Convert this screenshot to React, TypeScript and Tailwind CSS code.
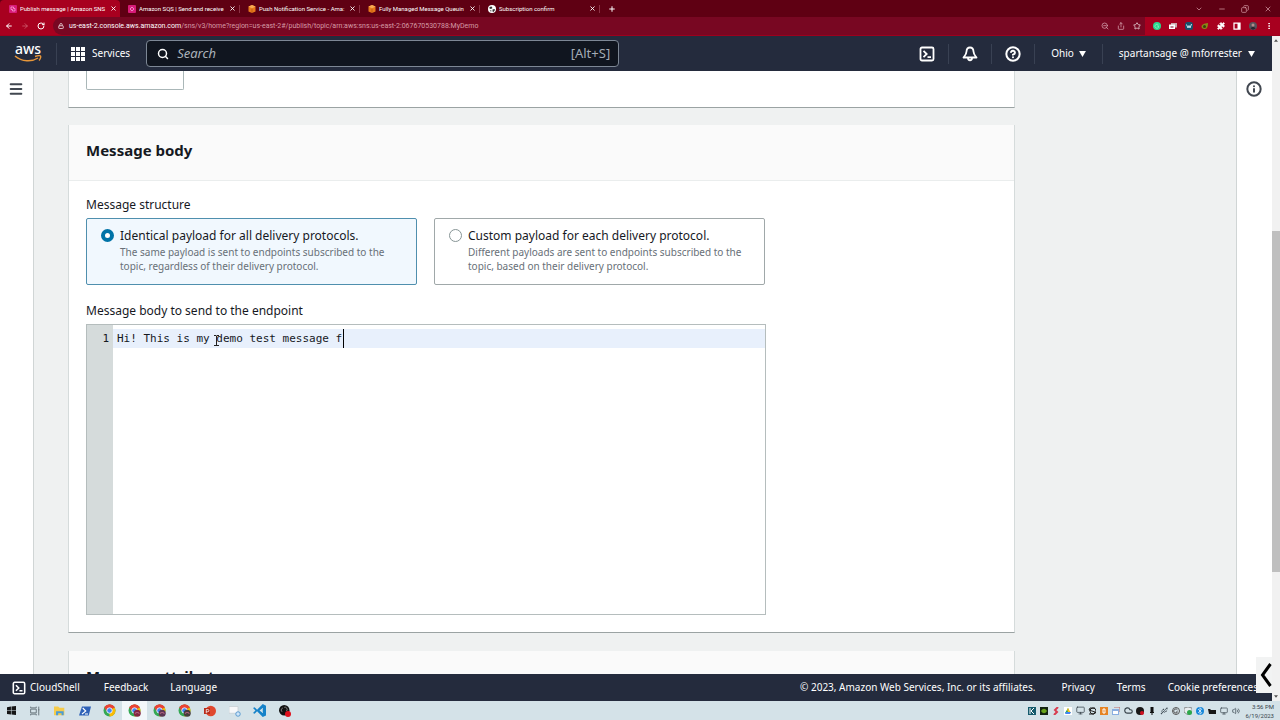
import React from "react";
import {
    ArrowLeft,
    ArrowRight,
    Bluetooth,
    ChevronDown,
    CircleHelp,
    Cloud,
    Copy,
    Info,
    Lock,
    Menu,
    Minus,
    Monitor,
    MoreVertical,
    Plus,
    Puzzle,
    RotateCw,
    Search,
    Share,
    Star,
    Usb,
    Volume2,
    X,
    ZoomOut,
} from "lucide-react";

const TABS = [
    { title: "Publish message | Amazon SNS", icon: "sns", active: true },
    { title: "Amazon SQS | Send and receive", icon: "sqs", active: false },
    { title: "Push Notification Service - Ama:", icon: "cube", active: false },
    { title: "Fully Managed Message Queuin", icon: "cube", active: false },
    { title: "Subscription confirm", icon: "globe", active: false },
];

const TabIcon: React.FC<{ name: string }> = ({ name }) => {
    if (name === "globe") {
        return (
            <svg viewBox="0 0 16 16" className="size-2 shrink-0">
                <circle cx="8" cy="8" r="8" fill="#fff" />
                <path d="M3 4l4-1 2 3-3 2-3-1zM9 9l4-1 1 2-3 4-2-1zM4 10l3 1-1 3z" fill="#333" />
            </svg>
        );
    }
    if (name === "cube") {
        return (
            <svg viewBox="0 0 16 16" className="size-2 shrink-0">
                <path d="M8 0l7 3v10l-7 3-7-3V3z" fill="#e8791c" />
                <path d="M8 0l7 3-7 4-7-4z" fill="#f8ac55" />
                <path d="M8 7v9" stroke="#9a4508" />
            </svg>
        );
    }
    return (
        <svg viewBox="0 0 16 16" className="size-2 shrink-0">
            <rect width="16" height="16" rx="2" fill="#d81b78" />
            <path
                d={name === "sns" ? "M4 4h5v3h3v5H7V9H4z" : "M4 8l4-4 4 4-4 4z"}
                fill="none"
                stroke="#f6a9d8"
                strokeWidth="1.5"
            />
        </svg>
    );
};

const TabStrip: React.FC = () => (
    <div className="flex h-[17px] items-center bg-[#5f0013] font-[Roboto,sans-serif] text-white">
        {TABS.map((tab) => (
            <div
                key={tab.title}
                className={
                    tab.active
                        ? "flex h-full w-[120px] items-center gap-[3px] rounded-t-sm bg-[#a8001f] pr-[3px] pl-[9px]"
                        : "flex h-2 w-[120px] items-center gap-[3px] border-r border-[#8c3044] pr-[3px] pl-[8px]"
                }
            >
                <TabIcon name={tab.icon} />
                <span className="min-w-0 flex-1 overflow-hidden text-[6px] leading-[10px] whitespace-nowrap">
                    {tab.title}
                </span>
                <button aria-label="Close tab">
                    <X size={7} strokeWidth={3} />
                </button>
            </div>
        ))}
        <button aria-label="New tab" className="pl-2">
            <Plus size={8} strokeWidth={3} />
        </button>
        <div className="ml-auto flex items-center gap-[15px] pr-2 text-[#e3a9b3]">
            <button aria-label="Tab list"><ChevronDown size={8} /></button>
            <button aria-label="Minimize"><Minus size={8} /></button>
            <button aria-label="Restore"><Copy size={8} className="scale-x-[-1]" /></button>
            <button aria-label="Close window"><X size={8} /></button>
        </div>
    </div>
);

const AddressBar: React.FC = () => (
    <div className="flex h-[19px] items-center border-b border-[#9d001d] bg-[#a8001f] pl-[5px] font-[Roboto,sans-serif] text-white">
        <div className="flex w-12 items-center gap-2">
            <button aria-label="Back"><ArrowLeft size={8} strokeWidth={3} /></button>
            <button aria-label="Forward" className="text-[#d8707f]"><ArrowRight size={8} /></button>
            <button aria-label="Reload"><RotateCw size={8} strokeWidth={3} /></button>
        </div>
        <div className="flex h-full flex-1 items-center rounded-l-full bg-[#780722] pl-1">
            <Lock size={6} strokeWidth={4} className="ml-px text-[#d9b4bc]" />
            <span className="ml-[5px] text-[7px] whitespace-nowrap text-[#d59aa5]">
                <span className="text-white">us-east-2.console.aws.amazon.com</span>
                /sns/v3/home?region=us-east-2#/publish/topic/arn:aws:sns:us-east-2:067670530788:MyDemo
            </span>
            <div className="ml-auto flex items-center gap-2 pr-1 text-[#e3b5bf]">
                <ZoomOut size={8} />
                <Share size={8} />
                <Star size={8} className="text-white" />
            </div>
        </div>
        <div className="flex items-center gap-2 pr-[7px] pl-2">
            <svg viewBox="0 0 16 16" className="size-2">
                <circle cx="8" cy="8" r="8" fill="#28d88d" />
                <path d="M11 6a4 4 0 1 0 0 5V8H8" fill="none" stroke="#8df0c4" strokeWidth="1.5" />
            </svg>
            <svg viewBox="0 0 16 16" className="size-2">
                <path d="M4 2h12v9H4z" fill="#c9a9ae" />
                <path d="M0 5h12v9H0z" fill="#fff" />
                <path d="M3 9h6v2H3z" fill="#780722" />
            </svg>
            <svg viewBox="0 0 16 16" className="size-2">
                <rect width="16" height="16" rx="5" fill="#17506b" />
                <path d="M3 5l3 7 2-5 2 5 3-8" fill="none" stroke="#cfe6f0" strokeWidth="2" />
            </svg>
            <svg viewBox="0 0 16 16" className="size-2">
                <path d="M1 9c0-4 5-6 13-7 0 8-2 12-7 12-4 0-6-2-6-5z" fill="#8a8a16" />
                <circle cx="7" cy="9" r="3" fill="#3a3d10" />
            </svg>
            <Puzzle size={8} fill="#fff" className="text-white" />
            <svg viewBox="0 0 16 16" className="size-2">
                <path d="M2 2h12v12H2z" fill="none" stroke="#fff" strokeWidth="2.5" />
                <path d="M9 2h5v12H9z" fill="#fff" />
            </svg>
            <svg viewBox="0 0 16 16" className="size-2">
                <circle cx="8" cy="8" r="8" fill="#56535c" />
                <circle cx="8" cy="6" r="3" fill="#b58a8a" />
                <path d="M3 13c1-4 9-4 10 0-3 3-7 3-10 0z" fill="#282530" />
            </svg>
            <MoreVertical size={8} strokeWidth={3} className="text-white" />
        </div>
    </div>
);

const AwsLogo: React.FC = () => (
    <span className="flex w-7 flex-col items-center">
        <span className="h-[11px] text-[14px] leading-[10px] font-medium">aws</span>
        <svg viewBox="0 0 28 8" className="h-2 w-7 text-[#e8973a]">
            <path d="M1 1c7 6 17 6 23 2" fill="none" stroke="currentColor" strokeWidth="1.5" />
            <path d="M21 1.5c3-1 5-1 5.5-.5s0 3-1.500 4.500" fill="none" stroke="currentColor" strokeWidth="1.4" />
        </svg>
    </span>
);

const ShellIcon: React.FC<{ className: string }> = ({ className }) => (
    <svg viewBox="0 0 16 16" className={className} fill="none" stroke="currentColor" strokeWidth="1.8">
        <rect x="1.5" y="1.5" width="13" height="13" rx="1.500" />
        <path d="M4.500 4.800L7.700 8l-3.200 3.200M8.500 11.200h3.500" />
    </svg>
);

const Caret: React.FC = () => (
    <svg viewBox="0 0 8 7" className="h-[6px] w-[7px]">
        <path d="M0 0h8L4 7z" fill="currentColor" />
    </svg>
);

const AwsHeader: React.FC = () => (
    <header className="flex h-[35px] shrink-0 items-center bg-[#242b3d] text-[10px] text-white">
        <a href="#home" aria-label="AWS home" className="pl-[14px]">
            <AwsLogo />
        </a>
        <span className="ml-[14px] h-[22px] w-px bg-[#394153]" />
        <button className="ml-[14px] flex items-center gap-[7px]">
            <svg viewBox="0 0 14 14" className="size-[14px]" fill="currentColor">
                <path d="M0 0h4v4H0zM5 0h4v4H5zM10 0h4v4h-4zM0 5h4v4H0zM5 5h4v4H5zM10 5h4v4h-4zM0 10h4v4H0zM5 10h4v4H5zM10 10h4v4h-4z" />
            </svg>
            Services
        </button>
        <label className="ml-4 flex h-[27px] w-[473px] items-center rounded-sm border border-[#7d8795] bg-[#10151f] pr-2 pl-[10px]">
            <Search size={12} strokeWidth={3} />
            <input
                type="text"
                aria-label="Search"
                placeholder="Search"
                className="ml-2 min-w-0 flex-1 bg-transparent text-[13px] outline-none placeholder:text-[#aab2bb] placeholder:italic"
            />
            <span className="text-[13px] text-[#a3abb5]">[Alt+S]</span>
        </label>
        <div className="ml-auto flex items-center">
            <button aria-label="CloudShell"><ShellIcon className="size-4" /></button>
            <span className="mx-[13px] h-[20px] w-px bg-[#394153]" />
            <button aria-label="Notifications">
                <svg viewBox="0 0 16 16" className="size-4" fill="none" stroke="currentColor" strokeWidth="1.8" strokeLinejoin="round">
                    <path d="M8 1.500c-2.500 0-3.400 1.800-3.500 4C4.300 8.500 3 9.500 1.500 11.500h13C13 9.500 11.700 8.500 11.500 5.500c-.1-2.200-1-4-3.500-4zM6 12c0 3 4 3 4 0" />
                </svg>
            </button>
            <span className="mx-[13px] h-[20px] w-px bg-[#394153]" />
            <button aria-label="Help"><CircleHelp size={16} strokeWidth={3} /></button>
            <span className="ml-[13px] h-[20px] w-px bg-[#394153]" />
            <button className="ml-4 flex items-center gap-[5px]">
                Ohio <Caret />
            </button>
            <span className="ml-4 h-[20px] w-px bg-[#394153]" />
            <button className="mr-[17px] ml-4 flex items-center gap-[6px]">
                spartansage @ mforrester <Caret />
            </button>
        </div>
    </header>
);

type PanelProps = { title: string; children?: React.ReactNode };

const Panel: React.FC<PanelProps> = ({ title, children }) => (
    <section className="mb-[18px] border-x border-b border-[#d5dbdb] border-b-[#9ba3a3] bg-white">
        <h2 className="border-b border-[#eaeded] bg-[#fafafa] px-[17px] pt-[14px] pb-[19px] text-[15px] leading-[22px] font-bold">
            {title}
        </h2>
        {children}
    </section>
);

type TileProps = {
    title: string;
    description: string;
    checked: boolean;
    onSelect: () => void;
};

const Tile: React.FC<TileProps> = ({ title, description, checked, onSelect }) => (
    <label
        className={
            checked
                ? "flex flex-1 gap-[6px] rounded-[2px] border border-[#4f8fae] bg-[#f1f8fe] px-[14px] pt-[9px] pb-[11px]"
                : "flex flex-1 gap-[6px] rounded-[2px] border border-[#a0a8a9] bg-white px-[14px] pt-[9px] pb-[11px]"
        }
    >
        <input
            type="radio"
            name="structure"
            checked={checked}
            onChange={onSelect}
            className="mt-[1px] size-[13px] shrink-0 appearance-none rounded-full border border-[#879596] bg-white checked:border-4 checked:border-[#0073a7]"
        />
        <span>
            <span className="block text-[12px] leading-4 whitespace-nowrap">{title}</span>
            <span className="mt-px block text-[10px] leading-[14px] text-[#687078]">
                {description}
            </span>
        </span>
    </label>
);

const MessageBody: React.FC = () => {
    const [structure, setStructure] = React.useState("identical");
    return (
        <div className="px-[17px] pt-4 pb-[17px]">
            <fieldset>
                <legend className="text-[12px] leading-4">Message structure</legend>
                <div className="mt-[5px] flex w-[679px] gap-[17px]">
                    <Tile
                        title="Identical payload for all delivery protocols."
                        description="The same payload is sent to endpoints subscribed to the topic, regardless of their delivery protocol."
                        checked={structure === "identical"}
                        onSelect={() => setStructure("identical")}
                    />
                    <Tile
                        title="Custom payload for each delivery protocol."
                        description="Different payloads are sent to endpoints subscribed to the topic, based on their delivery protocol."
                        checked={structure === "custom"}
                        onSelect={() => setStructure("custom")}
                    />
                </div>
            </fieldset>
            <label htmlFor="body" className="mt-[18px] block text-[12px] leading-4">
                Message body to send to the endpoint
            </label>
            <div className="relative mt-[5px] flex h-[291px] w-[680px] border border-[#b5bdbd] font-['DejaVu_Sans_Mono','Liberation_Mono',monospace] text-[11px] leading-[19px]">
                <div className="w-[26px] bg-[#d5dbdb] pt-1 pr-1 text-right">1</div>
                <textarea
                    id="body"
                    spellCheck={false}
                    defaultValue="Hi! This is my demo test message f"
                    className="flex-1 resize-none bg-[linear-gradient(#e8f0fc,#e8f0fc)] bg-[length:100%_19px] bg-[position:0_4px] bg-no-repeat pt-1 pl-1 outline-none"
                />
                <span className="absolute top-1 left-[256px] h-[19px] w-px bg-black" />
                <svg viewBox="0 0 5 11" className="absolute top-[10px] left-[127px] h-[11px] w-[5px]" fill="none" stroke="#222">
                    <path d="M0 .5h2l.5.5.5-.5h2M2.500 1v9M0 10.500h5" />
                </svg>
            </div>
        </div>
    );
};

const AwsFooter: React.FC = () => (
    <footer className="relative flex h-[27px] shrink-0 items-center bg-[#242b3d] pr-[14px] pl-3 text-[10px] whitespace-nowrap text-white">
        <button className="flex items-center gap-1">
            <ShellIcon className="size-[14px]" /> CloudShell
        </button>
        <a href="#feedback" className="ml-6">Feedback</a>
        <button className="ml-[22px]">Language</button>
        <div className="ml-auto flex gap-[22px]">
            <span className="mr-1">© 2023, Amazon Web Services, Inc. or its affiliates.</span>
            <a href="#privacy">Privacy</a>
            <a href="#terms">Terms</a>
            <a href="#cookies">Cookie preferences</a>
        </div>
        <button
            aria-label="Expand"
            className="absolute right-0 bottom-2 flex h-9 w-4 items-center justify-end bg-[#f2f3f3] text-black"
        >
            <svg viewBox="0 0 11 24" className="h-6 w-3" fill="none" stroke="currentColor" strokeWidth="3">
                <path d="M10 1L2 12l8 11" />
            </svg>
        </button>
    </footer>
);

const PageScrollbar: React.FC = () => (
    <div className="flex w-2 shrink-0 flex-col items-center bg-[#f1f1f1] text-[#505050]">
        <svg viewBox="0 0 6 4" className="mt-[3px] h-[3px] w-1">
            <path d="M0 4l3-4 3 4z" fill="currentColor" />
        </svg>
        <div className="mt-[189px] h-[341px] w-full bg-[#bfbfbf]" />
        <svg viewBox="0 0 6 4" className="mt-auto mb-[3px] h-[3px] w-1">
            <path d="M0 0l3 4 3-4z" fill="currentColor" />
        </svg>
    </div>
);

const Chrome: React.FC<{ badge?: string }> = ({ badge }) => (
    <svg viewBox="0 0 24 24" className="size-[13px]">
        <circle cx="12" cy="12" r="11" fill="#34a853" />
        <path d="M12 12L2.500 6.500A11 11 0 0 1 21.500 6.500z" fill="#ea4335" />
        <path d="M12 12l9.500-5.500A11 11 0 0 1 12 23z" fill="#fbbc05" />
        <path d="M8 7h13.700A11 11 0 0 0 2.500 6.500L7 14z" fill="#ea4335" />
        <circle cx="12" cy="12" r="5" fill="#4285f4" stroke="#fff" strokeWidth="1.5" />
        {badge && <circle cx="17" cy="17" r="6.5" fill={badge} />}
        {badge && <path d="M13 18c2-3 6-3 8 0" stroke="#b06080" strokeWidth="2" fill="none" />}
    </svg>
);

const PINNED = [
    <svg viewBox="0 0 16 16" className="size-[9px]" fill="#151515">
        <path d="M0 2l7-1v6.500H0zM8 1l8-1v7.500H8zM0 8.500h7V15l-7-1zM8 8.500h8V16l-8-1z" />
    </svg>,
    <svg viewBox="0 0 16 16" className="size-[10px]" fill="none" stroke="#65727a" strokeWidth="1.5">
        <path d="M1 1v2h9V1M1 5h9v6H1zM1 15v-2h9v2M14 1v14M13 6h2" />
    </svg>,
    <svg viewBox="0 0 16 16" className="size-[11px]">
        <path d="M0 2h6l2 2h7v11H0z" fill="#f5cb4a" />
        <path d="M3 9h11v6h-3v-3H6v3H3z" fill="#4b9cd8" />
    </svg>,
    <svg viewBox="0 0 16 16" className="size-3">
        <path d="M4 2h12l-3 12H0z" fill="#2f62b8" />
        <path d="M5 4l4 4-5 4M8 12h4" fill="none" stroke="#fff" strokeWidth="1.5" />
    </svg>,
    <Chrome />,
    <Chrome badge="#842640" />,
    <Chrome badge="#5b3550" />,
    <Chrome badge="#463f3c" />,
    <svg viewBox="0 0 16 16" className="size-3">
        <circle cx="9" cy="8" r="7" fill="#e0482e" />
        <path d="M0 4h8v8H0z" fill="#b82d1b" />
        <path d="M3 11V6h2a1 1 0 0 1 0 3H3" fill="none" stroke="#fff" />
    </svg>,
    <svg viewBox="0 0 16 16" className="size-3">
        <path d="M0 2h12v9H0z" fill="#f7f8fa" stroke="#c6cdd3" />
        <circle cx="12" cy="12" r="3" fill="#cfe5f8" stroke="#3b87c8" />
    </svg>,
    <svg viewBox="0 0 16 16" className="size-[13px]">
        <path d="M12 0l4 2v12l-4 2-7-7-3 3-2-1 3-3-3-3 2-1 3 3zM12 5L8 8l4 3z" fill="#1582c9" fillRule="evenodd" />
    </svg>,
    <svg viewBox="0 0 16 16" className="size-3">
        <circle cx="7" cy="7" r="7" fill="#111" />
        <path d="M7 3a3 3 0 0 1 3 5M4 9a3 3 0 0 1 1-5" stroke="#aaa" fill="none" />
        <circle cx="12" cy="12" r="4" fill="#e0101c" />
    </svg>,
];

const TRAY = [
    <svg viewBox="0 0 8 8" className="size-2">
        <path d="M0 0h8v8H0z" fill="#155a6c" />
        <path d="M2 1v6M6 1L3 4l3 3" stroke="#fff" fill="none" />
    </svg>,
    <svg viewBox="0 0 8 8" className="size-2">
        <path d="M0 0h8v8H0z" fill="#132312" />
        <path d="M1 4c2-3 4-3 6 0-2 3-4 3-6 0z" fill="#6aa51c" />
    </svg>,
    <svg viewBox="0 0 8 8" className="size-2">
        <path d="M6 0L3 3l2 2-3 3" stroke="#d83c50" strokeWidth="2" fill="none" />
    </svg>,
    <svg viewBox="0 0 8 8" className="size-2">
        <path d="M0 0h8v8H0z" fill="#fff" />
        <path d="M4 1L1 6h2l2-3z" fill="#1ea362" />
        <path d="M4 1l3 5H5L3 3z" fill="#f9bd17" />
        <path d="M1 7l1-2h5L6 7z" fill="#4285f4" />
    </svg>,
    <Monitor size={9} />,
    <svg viewBox="0 0 8 8" className="size-2" fill="none" stroke="#222">
        <path d="M7 1H2L1 3l6 2-1 2H1" />
        <circle cx="5" cy="4" r="3" />
    </svg>,
    <svg viewBox="0 0 8 8" className="size-2">
        <path d="M0 0h8v8H0z" fill="#e58324" />
        <path d="M3 2h2v4H3z" fill="none" stroke="#fff" />
    </svg>,
    <svg viewBox="0 0 8 8" className="size-2">
        <path d="M0 2h7v6H0z" fill="#8aaee0" />
        <path d="M2 0h6v5" stroke="#bd6a68" fill="none" />
        <path d="M1 4h5v3H1z" fill="#fff" />
    </svg>,
    <Cloud size={9} strokeWidth={3} />,
    <svg viewBox="0 0 8 8" className="size-2">
        <circle cx="4" cy="4" r="4" fill="#181818" />
        <circle cx="6" cy="6" r="2" fill="#d01020" />
    </svg>,
    <svg viewBox="0 0 8 8" className="size-2">
        <path d="M2.500 0h3v5h-3zM2 5h4v1H4.500v2h-1V6H2z" fill="#111" />
    </svg>,
    <Usb size={8} />,
    <svg viewBox="0 0 8 8" className="size-2" fill="none" stroke="#555">
        <circle cx="4" cy="4" r="3.5" />
        <path d="M5.500 3a2 2 0 1 0 0 2H4" />
    </svg>,
    <svg viewBox="0 0 8 8" className="size-2">
        <path d="M0 1l4-1 4 1v4L4 8 0 5z" fill="#e9edf0" stroke="#555" strokeWidth=".6" />
        <circle cx="5.5" cy="5.5" r="2.5" fill="#2ca84a" />
    </svg>,
    <span className="rounded-full bg-[#1687d9] text-white"><Bluetooth size={8} /></span>,
    <svg viewBox="0 0 8 8" className="size-2">
        <path d="M0 2h2l1 1h5v4H1z" fill="#171717" />
    </svg>,
    <Monitor size={8} />,
    <Volume2 size={8} />,
];

const Taskbar: React.FC = () => (
    <div className="flex h-[19px] shrink-0 items-center bg-[#d4e2e8] text-[#37434b]">
        <div className="flex h-full">
            {PINNED.map((icon, i) => (
                <button
                    key={i}
                    aria-label="Open app"
                    className={
                        i === 5
                            ? "flex w-[25px] items-center justify-center bg-[#f2f7fa]"
                            : "flex w-[25px] items-center justify-center first:w-[22px]"
                    }
                >
                    {icon}
                </button>
            ))}
        </div>
        <div className="ml-auto flex">
            {TRAY.map((icon, i) => (
                <span key={i} className="flex w-3 items-center justify-center">
                    {icon}
                </span>
            ))}
        </div>
        <div className="w-[38px] pr-[6px] text-right font-[Roboto,sans-serif] text-[6px] leading-[9px] whitespace-nowrap">
            <p>3:56 PM</p>
            <p>6/19/2023</p>
        </div>
    </div>
);

export default function App() {
    return (
        <div className="flex h-screen flex-col overflow-hidden font-['Noto_Sans',sans-serif] text-[#16191f]">
            <TabStrip />
            <AddressBar />
            <div className="flex min-h-0 flex-1">
                <div className="flex min-w-0 flex-1 flex-col">
                    <AwsHeader />
                    <div className="flex min-h-0 flex-1 bg-[#eff1f1]">
                        <nav className="w-[34px] shrink-0 border-r border-[#d0d5d5] bg-white pt-[10px] pl-2">
                            <button aria-label="Open navigation" className="flex">
                                <Menu size={16} strokeWidth={3} className="text-[#414750]" />
                            </button>
                        </nav>
                        <main className="min-w-0 flex-1 overflow-hidden px-[34px]">
                            <div className="max-w-[947px]">
                                <div className="mb-[17px] border-x border-b border-[#d5dbdb] border-b-[#9ba3a3] bg-white px-[17px] pb-[17px]">
                                    <input
                                        type="text"
                                        aria-label="Time to live"
                                        className="block h-[19px] w-[98px] rounded-b-[2px] border border-t-0 border-[#aab7b8] outline-none"
                                    />
                                </div>
                                <Panel title="Message body">
                                    <MessageBody />
                                </Panel>
                                <Panel title="Message attributes" />
                            </div>
                        </main>
                        <aside className="w-9 shrink-0 border-l border-[#d0d5d5] bg-white pt-[10px] pl-[9px]">
                            <button aria-label="Info" className="flex">
                                <Info size={16} strokeWidth={3} className="text-[#414750]" />
                            </button>
                        </aside>
                    </div>
                    <AwsFooter />
                </div>
                <PageScrollbar />
            </div>
            <Taskbar />
        </div>
    );
}
